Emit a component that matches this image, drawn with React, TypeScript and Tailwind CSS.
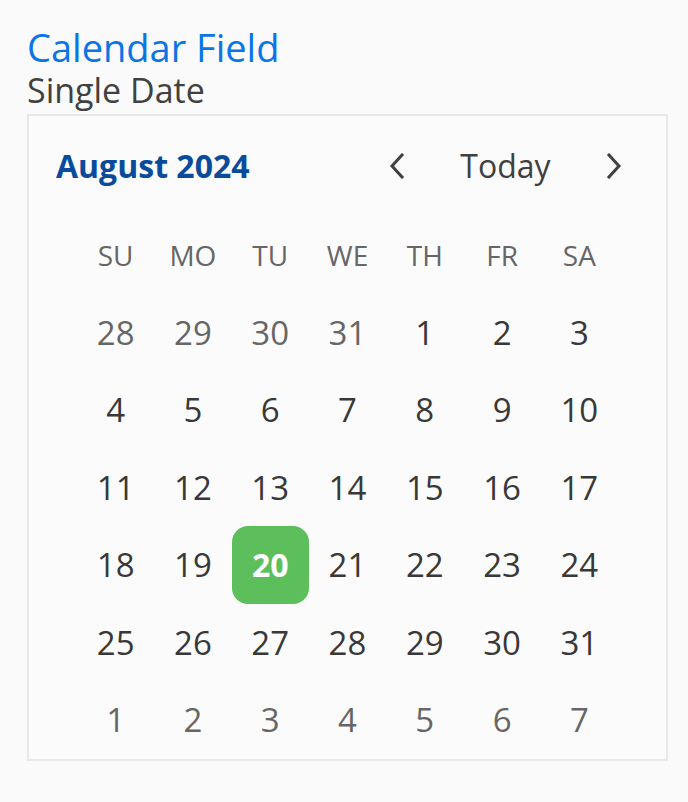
import React from "react";

const Chevron = ({ dir }: { dir: "left" | "right" }) => (
  <svg width="16" height="26" viewBox="0 0 16 26" fill="none" stroke="#404040" strokeWidth="3" strokeLinecap="square" strokeLinejoin="miter">
    {dir === "left" ? <polyline points="13,2 3,13 13,24" /> : <polyline points="3,2 13,13 3,24" />}
  </svg>
);

type Day = { n: number; muted?: boolean; selected?: boolean };

const weeks: Day[][] = [
  [{ n: 28, muted: true }, { n: 29, muted: true }, { n: 30, muted: true }, { n: 31, muted: true }, { n: 1 }, { n: 2 }, { n: 3 }],
  [{ n: 4 }, { n: 5 }, { n: 6 }, { n: 7 }, { n: 8 }, { n: 9 }, { n: 10 }],
  [{ n: 11 }, { n: 12 }, { n: 13 }, { n: 14 }, { n: 15 }, { n: 16 }, { n: 17 }],
  [{ n: 18 }, { n: 19 }, { n: 20, selected: true }, { n: 21 }, { n: 22 }, { n: 23 }, { n: 24 }],
  [{ n: 25 }, { n: 26 }, { n: 27 }, { n: 28 }, { n: 29 }, { n: 30 }, { n: 31 }],
  [{ n: 1, muted: true }, { n: 2, muted: true }, { n: 3, muted: true }, { n: 4, muted: true }, { n: 5, muted: true }, { n: 6, muted: true }, { n: 7, muted: true }],
];

const heads = ["SU", "MO", "TU", "WE", "TH", "FR", "SA"];

export default function App() {
  return (
    <div className="min-h-screen bg-[#fafafa] pl-[27px] pt-[27px]" style={{ fontFamily: '"Open Sans", "Noto Sans", sans-serif' }}>
      <div className="text-[38px] leading-[40px] text-[#0b74e6]">Calendar Field</div>
      <div className="text-[34px] leading-[47px] text-[#404040]">Single Date</div>
      <div className="w-[641px] border-2 border-[#e8e8e8] bg-[#fbfbfb]">
        <div className="flex h-[100px] items-center pl-[27px] pr-[28px]">
          <div className="text-[32px] font-bold text-[#0a4b9c]">August 2024</div>
          <div className="ml-auto flex items-center">
            <button className="flex h-12 w-12 items-center justify-center">
              <Chevron dir="left" />
            </button>
            <div className="w-[169px] text-center text-[32px] text-[#404040]">Today</div>
            <button className="flex h-12 w-12 items-center justify-center">
              <Chevron dir="right" />
            </button>
          </div>
        </div>
        <div className="mx-auto grid w-[541px] grid-cols-7">
          {heads.map((h) => (
            <div key={h} className="flex h-[77.5px] items-center justify-center text-[28px] text-[#666666]">
              {h}
            </div>
          ))}
          {weeks.flat().map((d, i) => (
            <div
              key={i}
              className={
                d.selected
                  ? "flex h-[77.5px] items-center justify-center rounded-[16px] bg-[#5cbf5c] text-[32px] font-bold text-white"
                  : d.muted
                  ? "flex h-[77.5px] items-center justify-center text-[33px] text-[#666666]"
                  : "flex h-[77.5px] items-center justify-center text-[33px] text-[#383838]"
              }
            >
              {d.n}
            </div>
          ))}
        </div>
      </div>
    </div>
  );
}
